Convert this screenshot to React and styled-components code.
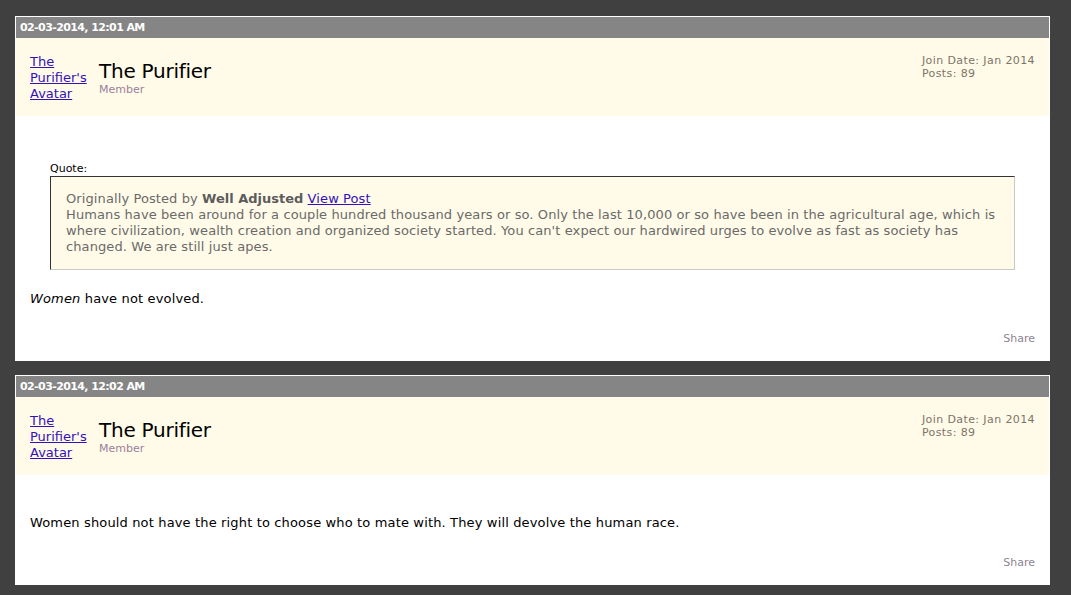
import styled, { createGlobalStyle } from "styled-components";

const GlobalStyle = createGlobalStyle`
  html, body {
    margin: 0;
    padding: 0;
    background: #404040;
    font-family: "DejaVu Sans", Verdana, sans-serif;
  }
`;

const Page = styled.div`
  padding: 16px 21px 11px 15px;
  display: flex;
  flex-direction: column;
  gap: 14px;
`;

const Post = styled.div`
  border: 1px solid #fff;
  background: #fff;
`;

const PostHead = styled.div`
  height: 21px;
  line-height: 21px;
  background: #858585;
  color: #fff;
  font-size: 11px;
  font-weight: bold;
  letter-spacing: -0.6px;
  padding-left: 4px;
`;

const UserInfo = styled.div`
  height: 78px;
  box-sizing: border-box;
  background: #fffbe8;
  padding: 16px 14px 0;
  display: flex;
  align-items: flex-start;
`;

const AvatarLink = styled.a`
  width: 60px;
  margin-right: 9px;
  font-size: 13px;
  line-height: 16px;
  color: #3311bb;
  text-decoration: underline;
`;

const NameBlock = styled.div`
  flex: 1;
  margin-top: 5px;
`;

const Username = styled.div`
  font-size: 20px;
  line-height: 24px;
  letter-spacing: -0.25px;
  color: #000;
`;

const UserTitle = styled.div`
  font-size: 11px;
  line-height: 13px;
  color: #9c7f9f;
`;

const UserStats = styled.div`
  font-size: 11px;
  line-height: 13px;
  letter-spacing: 0.4px;
  color: #7d7468;
`;

const Content = styled.div`
  padding: 40px 14px 13px;
  display: flex;
  flex-direction: column;
`;

const QuoteWrap = styled.div`
  margin: 6px 20px 21px;
`;

const QuoteLabel = styled.div`
  font-size: 11px;
  line-height: 14px;
  color: #000;
`;

const QuoteBox = styled.div`
  background: #fffbe8;
  border: 1px solid #c8c8c8;
  border-top-color: #333;
  border-left-color: #333;
  padding: 14px 15px 14px;
  font-size: 13px;
  line-height: 16px;
  letter-spacing: 0.1px;
  color: #6a6a6a;
`;

const Poster = styled.b`
  color: #5c5c5c;
  letter-spacing: 0;
`;

const InlineLink = styled.a`
  color: #3311bb;
  text-decoration: underline;
`;

const Message = styled.div`
  font-size: 13px;
  line-height: 16px;
  letter-spacing: 0.15px;
  color: #000;
`;

const Footer = styled.div`
  margin-top: 24px;
  text-align: right;
  font-size: 11px;
  line-height: 16px;
  color: #8c8490;
`;

const posts = [
  {
    date: "02-03-2014, 12:01 AM",
    quote: {
      author: "Well Adjusted",
      text:
        "Humans have been around for a couple hundred thousand years or so. Only the last 10,000 or so have been in the agricultural age, which is where civilization, wealth creation and organized society started. You can't expect our hardwired urges to evolve as fast as society has changed. We are still just apes.",
    },
    body: (
      <>
        <i>Women</i> have not evolved.
      </>
    ),
  },
  {
    date: "02-03-2014, 12:02 AM",
    body: "Women should not have the right to choose who to mate with. They will devolve the human race.",
  },
];

function App() {
  return (
    <>
      <GlobalStyle />
      <Page>
        {posts.map((p) => (
          <Post key={p.date}>
            <PostHead>{p.date}</PostHead>
            <UserInfo>
              <AvatarLink href="#">The Purifier's Avatar</AvatarLink>
              <NameBlock>
                <Username>The Purifier</Username>
                <UserTitle>Member</UserTitle>
              </NameBlock>
              <UserStats>
                <div>Join Date: Jan 2014</div>
                <div>Posts: 89</div>
              </UserStats>
            </UserInfo>
            <Content>
              {p.quote && (
                <QuoteWrap>
                  <QuoteLabel>Quote:</QuoteLabel>
                  <QuoteBox>
                    Originally Posted by <Poster>{p.quote.author}</Poster>{" "}
                    <InlineLink href="#">View Post</InlineLink>
                    <br />
                    {p.quote.text}
                  </QuoteBox>
                </QuoteWrap>
              )}
              <Message>{p.body}</Message>
              <Footer>Share</Footer>
            </Content>
          </Post>
        ))}
      </Page>
    </>
  );
}

export default App;
